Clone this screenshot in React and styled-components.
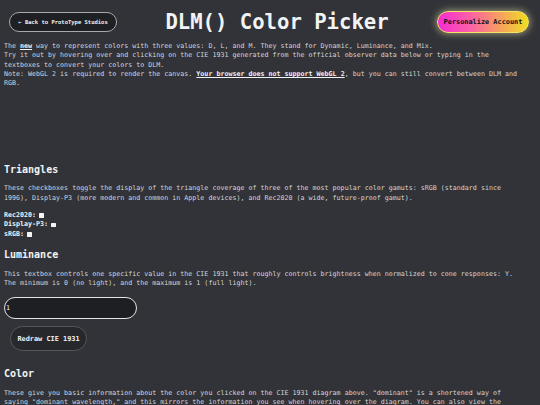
import React from "react";
import styled, { createGlobalStyle } from "styled-components";

const Global = createGlobalStyle`
  html, body { margin: 0; padding: 0; background: #313338; }
  body {
    font-family: "DejaVu Sans Mono", "Liberation Mono", monospace;
    color: #d4d6da;
    font-size: 6.67px;
    line-height: 9.33px;
  }
  * { box-sizing: border-box; }
`;

const Header = styled.header`
  display: flex;
  align-items: center;
  justify-content: space-between;
  width: 540px;
  height: 42px;
  padding: 2px 11px 0 9px;
`;

const Main = styled.main`
  width: 540px;
  padding: 0 18px 0 4px;
`;

const BackButton = styled.button`
  width: 108px;
  height: 20px;
  border-radius: 10px;
  border: 1px solid #a7a9ad;
  background: #1f2023;
  color: #f2f3f5;
  font-family: inherit;
  font-weight: bold;
  font-size: 5.5px;
  padding: 0;
  cursor: pointer;
`;

const Title = styled.h1`
  margin: 0;
  font-size: 20.6px;
  line-height: 24px;
  font-weight: bold;
  color: #f2f3f5;
  white-space: nowrap;
`;

const AccountButton = styled.button`
  width: 92px;
  height: 22px;
  border-radius: 11px;
  border: 1px solid #f6e36a;
  background: linear-gradient(90deg, #f52bd2 0%, #fb5fa8 35%, #f6a25c 70%, #f1de22 100%);
  box-shadow: 0 0 7px 1px rgba(240, 235, 170, 0.55);
  color: #111;
  font-family: inherit;
  font-weight: bold;
  font-size: 6.9px;
  padding: 0;
`;

const Text = styled.p`
  margin: 0 0 ${(p) => p.$mb ?? 8}px;
`;

const Strong = styled.a`
  color: #f2f3f5;
  font-weight: bold;
  text-decoration: underline;
`;

const CanvasArea = styled.div`
  height: 74px;
`;

const Heading = styled.h2`
  margin: 0 0 7.7px;
  font-size: 10px;
  line-height: 14px;
  font-weight: bold;
  color: #f2f3f5;
`;

const Section = styled.section`
  margin-bottom: ${(p) => p.$mb ?? 9.4}px;
`;

const CheckRow = styled.div`
  display: flex;
  align-items: center;
  height: 9.33px;
  font-weight: bold;
  color: #f2f3f5;
`;

const Box = styled.span`
  display: inline-block;
  width: 4.5px;
  height: 4.5px;
  margin-left: 3px;
  background: #f4f4f4;
  border-radius: 0.5px;
`;

const Checks = styled.div`
  display: flex;
  flex-direction: column;
`;

const Field = styled.input`
  display: block;
  width: 133px;
  height: 22px;
  border-radius: 11px;
  border: 1px solid #e3e4e6;
  background: #1e1f22;
  color: #f2f3f5;
  font-family: inherit;
  font-size: 6.67px;
  padding: 0 0 0 1px;
  margin: 0 0 7.2px;
  outline: none;
`;

const RedrawButton = styled.button`
  display: block;
  width: 77px;
  height: 25px;
  margin-left: 6px;
  border-radius: 12.5px;
  border: 1px solid #54565c;
  background: #27282c;
  color: #f2f3f5;
  font-family: inherit;
  font-weight: bold;
  font-size: 6.9px;
  padding: 0;
`;

export default function App() {
  return (
    <>
      <Global />
      <Header>
        <BackButton>← Back to ProtoType Studios</BackButton>
        <Title>DLM() Color Picker</Title>
        <AccountButton>Personalize Account</AccountButton>
      </Header>
      <Main>
        <Text $mb={0}>
          The <Strong>new</Strong> way to represent colors with three values: D, L, and M. They stand for Dynamic, Luminance, and Mix.
          <br />
          Try it out by hovering over and clicking on the CIE 1931 generated from the official observer data below or typing in the textboxes to convert your colors to DLM.
          <br />
          Note: WebGL 2 is required to render the canvas. <Strong>Your browser does not support WebGL 2</Strong>, but you can still convert between DLM and RGB.
        </Text>
        <CanvasArea />
        <Section>
          <Heading>Triangles</Heading>
          <Text>
            These checkboxes toggle the display of the triangle coverage of three of the most popular color gamuts: sRGB (standard since 1996), Display-P3 (more modern and common in Apple devices), and Rec2020 (a wide, future-proof gamut).
          </Text>
          <Checks>
            <CheckRow>Rec2020:<Box /></CheckRow>
            <CheckRow>Display-P3:<Box /></CheckRow>
            <CheckRow>sRGB:<Box /></CheckRow>
          </Checks>
        </Section>
        <Section $mb={15.5}>
          <Heading>Luminance</Heading>
          <Text $mb={8.6}>
            This textbox controls one specific value in the CIE 1931 that roughly controls brightness when normalized to cone responses: Y. The minimum is 0 (no light), and the maximum is 1 (full light).
          </Text>
          <Field defaultValue="1" />
          <RedrawButton>Redraw CIE 1931</RedrawButton>
        </Section>
        <Section>
          <Heading>Color</Heading>
          <Text>
            These give you basic information about the color you clicked on the CIE 1931 diagram above. "dominant" is a shortened way of saying "dominant wavelength," and this mirrors the information you see when hovering over the diagram. You can also view the color in other color spaces below.
          </Text>
        </Section>
      </Main>
    </>
  );
}
